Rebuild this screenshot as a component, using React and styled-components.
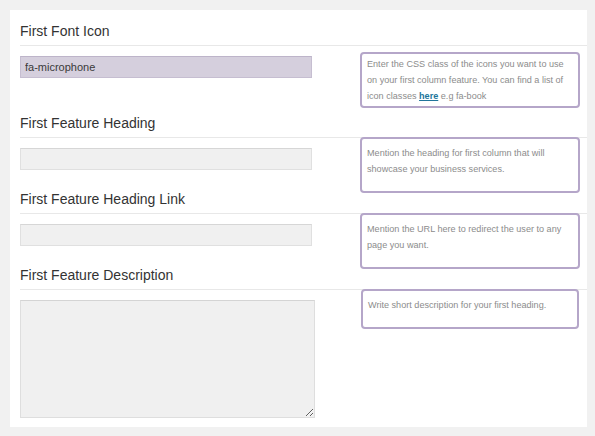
import React from 'react';
import styled, { createGlobalStyle } from 'styled-components';

const GlobalStyle = createGlobalStyle`
  html, body {
    margin: 0;
    padding: 0;
    background: #f1f1f1;
  }
  body {
    font-family: "Liberation Sans", Arial, sans-serif;
  }
`;

const Page = styled.div`
  padding: 10px 8px 9px 10px;
`;

const Panel = styled.div`
  background: #ffffff;
  padding: 11px 0 9px 10px;
`;

const Field = styled.section``;

const Heading = styled.h3`
  margin: 0;
  font-size: 14px;
  font-weight: normal;
  line-height: 20px;
  color: #333333;
  padding-bottom: 4px;
  border-bottom: 1px solid #e8e8e8;
`;

const Body = styled.div`
  display: flex;
  align-items: flex-start;
`;

const InputCol = styled.div`
  width: 340px;
  flex: none;
  padding: 10px 0 ${p => (p.$last ? 0 : 19)}px;
`;

const TextInput = styled.input`
  box-sizing: border-box;
  display: block;
  width: 292px;
  height: 22px;
  margin: 0;
  padding: 0 4px;
  font-family: "Liberation Sans", Arial, sans-serif;
  font-size: 11px;
  color: #3a3a3a;
  outline: none;
  background: ${p => (p.$active ? '#d5cfdd' : '#f0f0f0')};
  border: 1px solid ${p => (p.$active ? '#c6bed1' : '#e0e0e0')};
  border-top-color: ${p => (p.$active ? '#bdb4c9' : '#d6d6d6')};
`;

const TextArea = styled.textarea`
  box-sizing: border-box;
  display: block;
  width: 295px;
  height: 118px;
  margin: 0;
  padding: 4px;
  background: #f0f0f0;
  border: 1px solid #dedede;
  border-top-color: #d4d4d4;
  outline: none;
  font-family: "Liberation Sans", Arial, sans-serif;
  font-size: 11px;
`;

const HelpBox = styled.div`
  box-sizing: border-box;
  width: ${p => (p.$narrow ? 218 : 220)}px;
  margin-left: ${p => (p.$narrow ? 1 : 0)}px;
  margin-top: ${p => (p.$first ? 6 : -1)}px;
  margin-bottom: ${p => (p.$first ? 5 : -20)}px;
  padding: ${p => (p.$first ? '2px 3px 2px 5px' : '6px 3px 14px 5px')};
  border: 2px solid #b5a6c9;
  border-radius: 4px;
  background: #ffffff;
  font-size: 9.1px;
  line-height: 16px;
  color: #8c8c8c;

  a {
    color: #21759b;
    font-weight: bold;
    text-decoration: underline;
  }
`;

export default function App() {
  return (
    <>
      <GlobalStyle />
      <Page>
        <Panel>
          <Field>
            <Heading>First Font Icon</Heading>
            <Body>
              <InputCol>
                <TextInput $active defaultValue="fa-microphone" />
              </InputCol>
              <HelpBox $first>
                Enter the CSS class of the icons you want to use on your first column feature. You can find a list of icon classes <a href="#icons">here</a> e.g fa-book
              </HelpBox>
            </Body>
          </Field>

          <Field>
            <Heading>First Feature Heading</Heading>
            <Body>
              <InputCol>
                <TextInput />
              </InputCol>
              <HelpBox>
                Mention the heading for first column that will showcase your business services.
              </HelpBox>
            </Body>
          </Field>

          <Field>
            <Heading>First Feature Heading Link</Heading>
            <Body>
              <InputCol>
                <TextInput />
              </InputCol>
              <HelpBox>
                Mention the URL here to redirect the user to any page you want.
              </HelpBox>
            </Body>
          </Field>

          <Field>
            <Heading>First Feature Description</Heading>
            <Body>
              <InputCol $last>
                <TextArea />
              </InputCol>
              <HelpBox $narrow>
                Write short description for your first heading.
              </HelpBox>
            </Body>
          </Field>
        </Panel>
      </Page>
    </>
  );
}
